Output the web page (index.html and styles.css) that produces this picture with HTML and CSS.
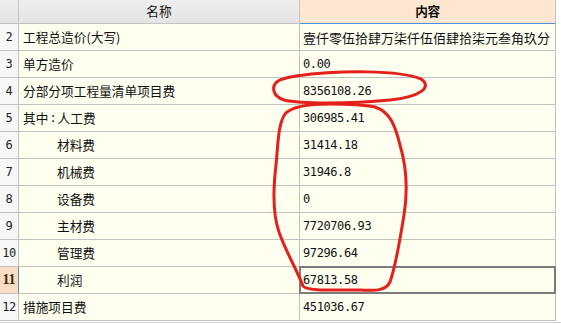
FILE: index.html
```html
<!DOCTYPE html>
<html lang="zh-CN">
<head>
<meta charset="utf-8">
<title>工程造价</title>
<link rel="stylesheet" href="styles.css">
</head>
<body>
<div class="sheet">
  <div class="grid">
    <div class="hd num"></div>
    <div class="hd name">名称</div>
    <div class="hd content">内容</div>

    <div class="num">2</div>
    <div class="name">工程总造价(大写)</div>
    <div class="content cjk">壹仟零伍拾肆万柒仟伍佰肆拾柒元叁角玖分</div>

    <div class="num">3</div>
    <div class="name">单方造价</div>
    <div class="content">0.00</div>

    <div class="num">4</div>
    <div class="name">分部分项工程量清单项目费</div>
    <div class="content">8356108.26</div>

    <div class="num">5</div>
    <div class="name">其中<span class="colon">:</span>人工费</div>
    <div class="content">306985.41</div>

    <div class="num">6</div>
    <div class="name sub">材料费</div>
    <div class="content">31414.18</div>

    <div class="num">7</div>
    <div class="name sub">机械费</div>
    <div class="content">31946.8</div>

    <div class="num">8</div>
    <div class="name sub">设备费</div>
    <div class="content">0</div>

    <div class="num">9</div>
    <div class="name sub">主材费</div>
    <div class="content">7720706.93</div>

    <div class="num">10</div>
    <div class="name sub">管理费</div>
    <div class="content">97296.64</div>

    <div class="num active">11</div>
    <div class="name sub">利润</div>
    <div class="content selected">67813.58</div>

    <div class="num">12</div>
    <div class="name">措施项目费</div>
    <div class="content">451036.67</div>
  </div>
  <div class="bottom-line"></div>

  <svg class="ink" width="561" height="324" viewBox="0 0 561 324">
    <path d="M 296 76 C 340 70, 400 70, 421 79 C 433 87, 420 97, 390 100 C 350 104, 300 104, 284 100 C 272 96, 271 86, 278 81 C 283 78, 290 77, 296 76"/>
    <path d="M 330 104 C 310 104, 292 106, 285 114 C 278 124, 278 145, 276 165 C 273 190, 273 215, 279 232 C 285 250, 297 270, 303 286 C 306 291, 330 290, 360 290 C 378 291, 386 290, 390 282 C 396 265, 400 240, 404 215 C 408 190, 406 165, 400 145 C 395 125, 390 112, 375 107 C 360 104, 345 104, 330 104"/>
  </svg>
</div>
</body>
</html>
```

FILE: styles.css
```css
html, body {
  margin: 0;
  padding: 0;
  background: #ffffff;
}

body {
  font-family: "Noto Sans CJK SC", "Noto Sans", sans-serif;
  font-size: 13px;
  color: #111;
}

.sheet {
  position: relative;
  width: 561px;
  height: 324px;
  overflow: hidden;
}

.grid {
  display: grid;
  grid-template-columns: 18px 280px 255px;
  grid-template-rows: 23px repeat(11, 26px);
  gap: 1px;
  background: #c2c2c2;
  width: max-content;
  padding: 0 1px 1px 0;
}

.grid > div {
  display: flex;
  align-items: center;
  white-space: nowrap;
  overflow: hidden;
  line-height: 1;
}

.num {
  background: #f7f7f7;
  justify-content: center;
  font-family: "DejaVu Sans Mono", "Liberation Mono", monospace;
  font-size: 12px;
  letter-spacing: -0.4px;
  color: #222;
}

.name {
  background: #fffff0;
  padding-left: 4px;
  font-size: 12.7px;
}

.name.sub {
  padding-left: 38px;
}

.colon {
  font-family: "DejaVu Sans Mono", monospace;
  font-size: 12px;
  margin: 0 1px;
}

.content {
  background: #fffff0;
  padding-left: 3px;
  font-family: "DejaVu Sans Mono", "Liberation Mono", "Noto Sans CJK SC", monospace;
  font-size: 12px;
  letter-spacing: -0.4px;
}

.content.cjk {
  font-family: "Noto Sans CJK SC", sans-serif;
  font-size: 13px;
  letter-spacing: 0;
}

.hd {
  justify-content: center;
  font-family: "Noto Sans CJK SC", sans-serif;
  font-size: 12.7px;
  padding: 0;
}

.hd.num,
.hd.name {
  background: linear-gradient(#eeeeee, #e4e4e4);
}

.hd.content {
  background: #fde7d1;
  font-weight: bold;
  padding: 0;
  box-shadow: 0 1px 0 #4a8fdc;
}

.num.active {
  background: #f9dcc2;
  font-weight: bold;
  font-family: "Liberation Serif", serif;
  font-size: 14px;
  letter-spacing: 0;
  color: #3a2a10;
  box-shadow: 1px 0 0 #4a8fdc;
}

.content.selected {
  outline: 2px solid #7c7c7c;
  outline-offset: -1px;
}

.bottom-line {
  height: 1px;
  margin-top: 1px;
  background: #d4d4d4;
}

.ink {
  position: absolute;
  left: 0;
  top: 0;
  pointer-events: none;
}

.ink path {
  fill: none;
  stroke: #e4201c;
  stroke-width: 3;
  stroke-linecap: round;
  stroke-linejoin: round;
}
```
